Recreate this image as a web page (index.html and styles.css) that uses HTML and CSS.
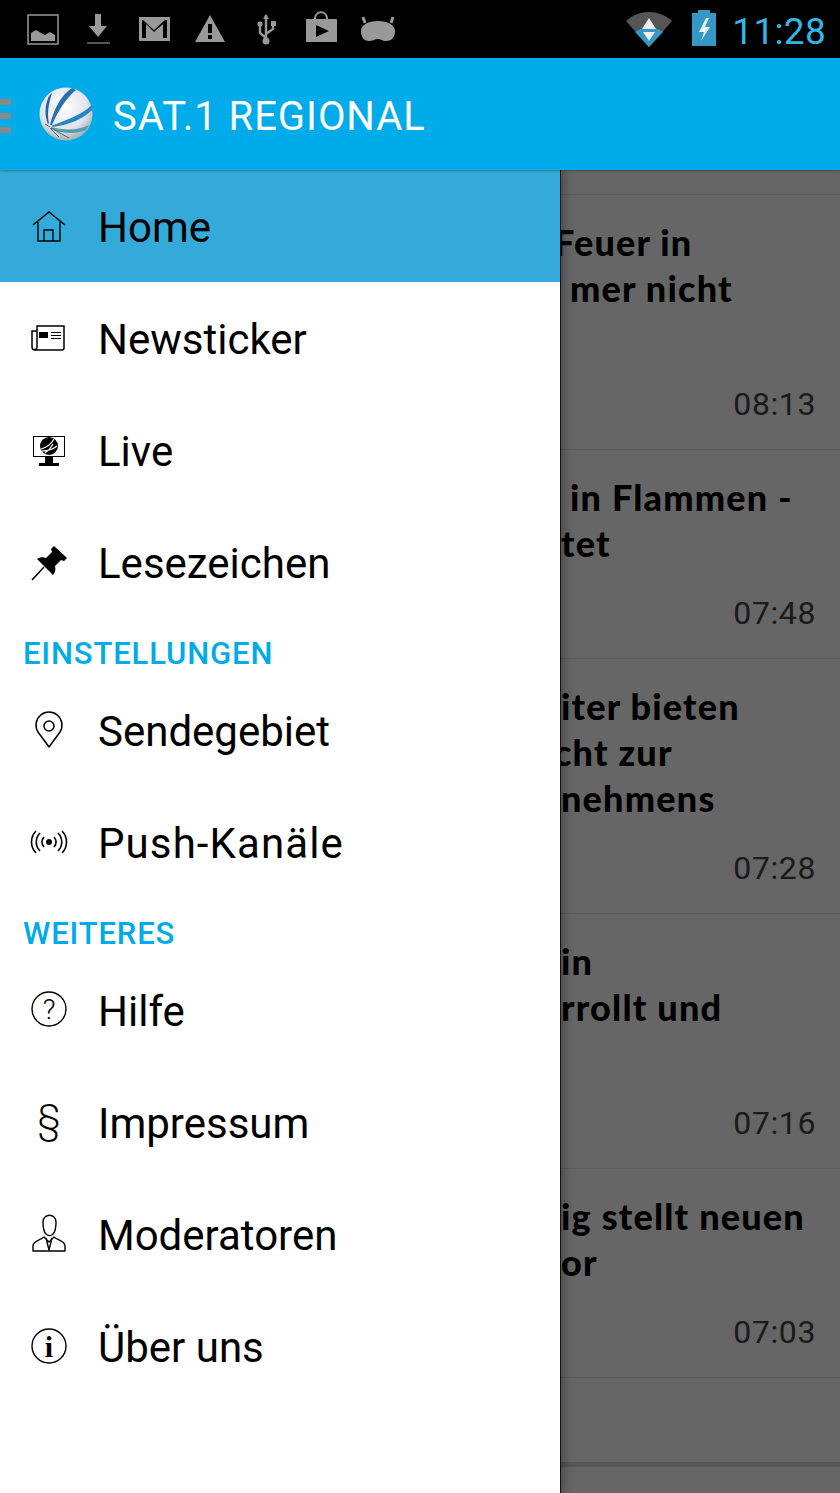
FILE: index.html
```html
<!DOCTYPE html>
<html lang="de">
<head>
    <meta charset="UTF-8">
    <meta name="viewport" content="width=device-width, initial-scale=1.0">
    <title>SAT.1 Regional</title>
    <link rel="stylesheet" href="styles.css">
</head>
<body>
<div class="phone">
    <div class="statusbar">
        <div class="status-left">
            <svg class="sicon" viewBox="0 0 56 58"><rect x="14" y="15" width="30" height="29" fill="none" stroke="#999" stroke-width="1.5"/><path d="M17 41V33l5-3 5 3 4 2 5-3 5 3v6z" fill="#999"/></svg>
            <svg class="sicon" viewBox="0 0 56 58"><path d="M25 14h6v12h6l-9 11-9-11h6z" fill="#999"/><rect x="17" y="42" width="23" height="2" fill="#555"/></svg>
            <svg class="sicon" viewBox="0 0 56 58"><path d="M13 17h31v24H13zM16 20v18h4V24l8 8 9-8v14h4V20h-2l-11 10-11-10z" fill="#999" fill-rule="evenodd"/></svg>
            <svg class="sicon" viewBox="0 0 56 58"><path d="M28 15l15 27H13z" fill="#999"/><rect x="26" y="24" width="4" height="9" fill="#000"/><rect x="26" y="35" width="4" height="4" fill="#000"/></svg>
            <svg class="sicon" viewBox="0 0 56 58"><path d="M28 15v24M28 38l-6-5v-7M28 34l7-5v-4" fill="none" stroke="#999" stroke-width="2.4"/><path d="M28 14l3 5h-6z" fill="#999"/><circle cx="22" cy="24" r="2.5" fill="#999"/><rect x="33" y="21" width="5" height="5" fill="#999"/><circle cx="28" cy="41" r="3.5" fill="#999"/></svg>
            <svg class="sicon" viewBox="0 0 56 58"><path d="M12 19h30a1 1 0 0 1 1 1v22H12z" fill="#999"/><path d="M21 19c0-9 12-9 12 0" fill="none" stroke="#999" stroke-width="2"/><path d="M22 25l13 6-13 6z" fill="#000"/></svg>
            <svg class="sicon" viewBox="0 0 56 58"><path d="M15 23l-2-6M41 23l2-6" stroke="#999" stroke-width="3"/><path d="M11 31c0-6 7-10 17-10s17 4 17 10c0 6-3 10-9 10-4 0-5-2-8-2s-5 2-9 2c-5 0-8-4-8-10z" fill="#999"/></svg>
        </div>
        <div class="status-right">
            <svg class="wifi" width="48" height="58" viewBox="0 0 48 58"><path d="M1 21c13-12 33-12 46 0L24 47z" fill="#555"/><path d="M10 32c8-6 20-6 28 0L24 47z" fill="#3399c4"/><path d="M24 18l7 11H17z" fill="#eee"/><path d="M18 32h12l-6 9z" fill="#eee"/></svg>
            <svg class="battery" width="26" height="58" viewBox="0 0 26 58"><path d="M7 10h12v3h6v33H1V13h6z" fill="#3399c4"/><path d="M15 18l-7 14h5l-3 9 9-14h-5l4-9z" fill="#e8f4f8"/></svg>
            <span class="clock">11:28</span>
        </div>
    </div>

    <div class="appbar">
        <div class="burger"><i></i><i></i><i></i></div>
        <svg class="logo" width="54" height="54" viewBox="0 0 54 54">
            <defs><radialGradient id="globe" cx="45%" cy="35%" r="70%"><stop offset="0" stop-color="#fff"/><stop offset="0.65" stop-color="#dfe3ea"/><stop offset="1" stop-color="#98a4a8"/></radialGradient></defs>
            <circle cx="27" cy="27" r="26.5" fill="url(#globe)"/>
            <path d="M10 9C5 20 6 30 9 37L10 36C8 28 9 18 13 6z" fill="#2a64a0"/>
            <path d="M33 1C22 8 15 22 11 38L13 38C19 24 27 11 37 3z" fill="#2a70b0"/>
            <path d="M53 18C42 28 28 33 12 39L14 40C30 38 44 32 53 23z" fill="#2a86c0"/>
            <path d="M50 38C38 44 24 43 12 40L12 42C24 47 38 47 47 43z" fill="#5a9ab0"/>
            <path d="M11 40L6 37M11 41L20 50M12 41L30 51" stroke="#56666e" stroke-width="1"/>
        </svg>
        <span class="appbar-title">SAT.1 REGIONAL</span>
    </div>

    <div class="content">
        <div class="news">
            <div class="news-strip"></div>
            <div class="news-row">
                <div class="news-line at-554">Feuer in</div>
                <div class="news-line at-570">mer nicht</div>
                <div class="news-line">&nbsp;</div>
                <div class="news-time">08:13</div>
            </div>
            <div class="news-row">
                <div class="news-line at-570">in Flammen -</div>
                <div class="news-line at-561">tet</div>
                <div class="news-time">07:48</div>
            </div>
            <div class="news-row">
                <div class="news-line at-561">iter bieten</div>
                <div class="news-line at-554">cht zur</div>
                <div class="news-line at-561">nehmens</div>
                <div class="news-time">07:28</div>
            </div>
            <div class="news-row">
                <div class="news-line at-561">in</div>
                <div class="news-line at-561">rrollt und</div>
                <div class="news-line">&nbsp;</div>
                <div class="news-time">07:16</div>
            </div>
            <div class="news-row">
                <div class="news-line at-561">ig stellt neuen</div>
                <div class="news-line at-561">or</div>
                <div class="news-time">07:03</div>
            </div>
            <div class="news-blank"></div>
        </div>
        <div class="scrim"></div>

        <nav class="drawer">
            <a class="item active">
                <svg class="icon" viewBox="0 0 40 40"><path d="M5 19L21 6l16 13M10 16v19h22V16M16 35V24h9v11" fill="none" stroke="#000" stroke-width="1.4"/></svg>
                <span>Home</span>
            </a>
            <a class="item">
                <svg class="icon" viewBox="0 0 40 40"><path d="M9 13H4v16c0 2 1 3 3 3h27c1 0 2-1 2-2V8H9v21c0 2-2 3-3 2" fill="none" stroke="#000" stroke-width="1.5"/><rect x="11" y="14" width="9" height="6"/><path d="M23 14.5h10M23 17.5h10M23 20.5h10" stroke="#000"/></svg>
                <span>Newsticker</span>
            </a>
            <a class="item">
                <svg class="icon" viewBox="0 0 40 40"><rect x="5.5" y="6.5" width="31" height="20" fill="none" stroke="#000"/><rect x="17" y="27" width="8" height="6"/><rect x="11" y="33" width="20" height="3"/><circle cx="21" cy="16" r="9"/><path d="M13 19c4-1 9-3 13-10M17 23c3-2 6-5 8-9M14 21c5 0 10-1 15-5" fill="none" stroke="#fff" stroke-width="1.2"/></svg>
                <span>Live</span>
            </a>
            <a class="item">
                <svg class="icon" viewBox="0 0 40 40"><path d="M4 38l12-13" stroke="#000" stroke-width="1.5"/><path d="M26 4l13 12-3 3-3-1-6 6c1 4 0 7-2 9L9 17c3-2 6-2 9-1l6-6-1-3z"/></svg>
                <span>Lesezeichen</span>
            </a>

            <div class="section">EINSTELLUNGEN</div>
            <a class="item">
                <svg class="icon" viewBox="0 0 40 40"><path d="M21 37L10 22a13 13 0 1 1 22 0z" fill="none" stroke="#000" stroke-width="1.5" stroke-linejoin="round"/><circle cx="21" cy="16" r="5" fill="none" stroke="#000" stroke-width="1.5"/></svg>
                <span>Sendegebiet</span>
            </a>
            <a class="item">
                <svg class="icon" viewBox="0 0 40 40"><circle cx="21" cy="20" r="3"/><path d="M16 15c-2.500 3-2.500 7 0 10M26 15c2.500 3 2.500 7 0 10M12 11c-5 5-5 13 0 18M30 11c5 5 5 13 0 18M8 9c-6 6-6 16 0 22M34 9c6 6 6 16 0 22" fill="none" stroke="#000" stroke-width="1.6"/></svg>
                <span class="wide">Push-Kanäle</span>
            </a>

            <div class="section">WEITERES</div>
            <a class="item">
                <svg class="icon" viewBox="0 0 40 40"><circle cx="21" cy="19" r="17" fill="none" stroke="#000" stroke-width="1.4"/><text class="glyph-sans" x="21" y="29" font-size="28">?</text></svg>
                <span>Hilfe</span>
            </a>
            <a class="item">
                <div class="icon para">§</div>
                <span>Impressum</span>
            </a>
            <a class="item">
                <svg class="icon" viewBox="0 0 40 40"><path d="M15 8c0-9 13-9 13 0 0 5-1 10-3 12-2 2-5 2-7 0-2-2-3-7-3-12z" fill="none" stroke="#000" stroke-width="1.4"/><path d="M5 37v-5c0-5 8-6 11-9l5 5 5-5c3 3 11 4 11 9v5zM18 24l3 12 3-12" fill="none" stroke="#000" stroke-width="1.4" stroke-linejoin="round"/></svg>
                <span>Moderatoren</span>
            </a>
            <a class="item">
                <svg class="icon" viewBox="0 0 40 40"><circle cx="21" cy="20" r="17" fill="none" stroke="#000" stroke-width="1.4"/><text class="glyph" x="21" y="31" font-size="30">i</text></svg>
                <span>Über uns</span>
            </a>
        </nav>
    </div>
</div>
</body>
</html>
```

FILE: styles.css
```css
* {
    box-sizing: border-box;
}
body {
    margin: 0;
    font-family: Roboto, "Liberation Sans", sans-serif;
    background: #000;
}
.phone {
    width: 840px;
    height: 1493px;
    overflow: hidden;
    display: flex;
    flex-direction: column;
}
.statusbar {
    height: 58px;
    background: #000;
    display: flex;
    justify-content: space-between;
    padding-left: 14px;
}
.status-left {
    display: flex;
}
.sicon {
    width: 56px;
    height: 58px;
}
.status-right {
    display: flex;
    align-items: center;
    padding-right: 14px;
}
.wifi {
    margin-right: 18px;
}
.battery {
    margin-right: 15px;
}
.clock {
    font-size: 37px;
    letter-spacing: 0.3px;
    padding-top: 5px;
    color: #33b5e5;
}
.appbar {
    height: 112px;
    background: #00abe9;
    display: flex;
    align-items: center;
    position: relative;
    padding-left: 39px;
    z-index: 2;
    box-shadow: 0 1px 2px rgba(0,0,0,0.3);
}
.burger {
    position: absolute;
    left: 0;
    top: 41px;
    display: flex;
    flex-direction: column;
    gap: 8px;
}
.burger i {
    display: block;
    width: 11px;
    height: 6px;
    background: #888;
}
.logo {
    flex: none;
}
.appbar-title {
    font-size: 40px;
    letter-spacing: 0.95px;
    color: #fff;
    margin-left: 20px;
    padding-top: 4px;
}
.content {
    flex: 1;
    position: relative;
    overflow: hidden;
    background: #fff;
}
.news-strip {
    height: 25px;
    border-bottom: 1px solid #e8e8e8;
}
.news-row {
    padding: 25px 24px 22px 0;
    border-bottom: 1px solid #e8e8e8;
}
.news-line {
    height: 46px;
    line-height: 44px;
    font-family: Lato, sans-serif;
    font-weight: 900;
    font-size: 36px;
    letter-spacing: 1.2px;
    white-space: nowrap;
    color: #000;
}
.at-554 {
    padding-left: 554px;
}
.at-561 {
    padding-left: 561px;
}
.at-570 {
    padding-left: 570px;
}
.news-time {
    margin-top: 23px;
    height: 46px;
    line-height: 46px;
    font-size: 32px;
    letter-spacing: 0.6px;
    text-align: right;
    color: #444;
}
.news-blank {
    height: 84px;
    border-bottom: 5px solid #d9d9d9;
    box-sizing: content-box;
}
.scrim {
    position: absolute;
    inset: 0;
    background: rgba(0,0,0,0.6);
}
.drawer {
    position: absolute;
    top: 0;
    left: 0;
    bottom: 0;
    width: 560px;
    background: #fff;
    box-shadow: 1px 0 0 #111, 4px 0 10px rgba(0,0,0,0.3);
}
.item {
    height: 112px;
    display: flex;
    align-items: center;
    padding-left: 28px;
    gap: 30px;
    font-size: 42px;
    color: #000;
}
.item span {
    padding-top: 3px;
}
.item .wide {
    letter-spacing: 1.1px;
}
.item.active {
    background: #33aad9;
}
.icon {
    width: 40px;
    height: 40px;
    flex: none;
}
.para {
    font-weight: 300;
    font-size: 38px;
    line-height: 34px;
    text-align: center;
    padding-left: 2px;
}
.glyph {
    font-family: "Liberation Serif", serif;
    font-weight: bold;
    text-anchor: middle;
}
.glyph-sans {
    font-weight: 300;
    text-anchor: middle;
}
.section {
    height: 56px;
    padding: 17px 0 0 23px;
    font-size: 31px;
    font-weight: 500;
    letter-spacing: 0.85px;
    line-height: 38px;
    color: #00abe9;
}
```
